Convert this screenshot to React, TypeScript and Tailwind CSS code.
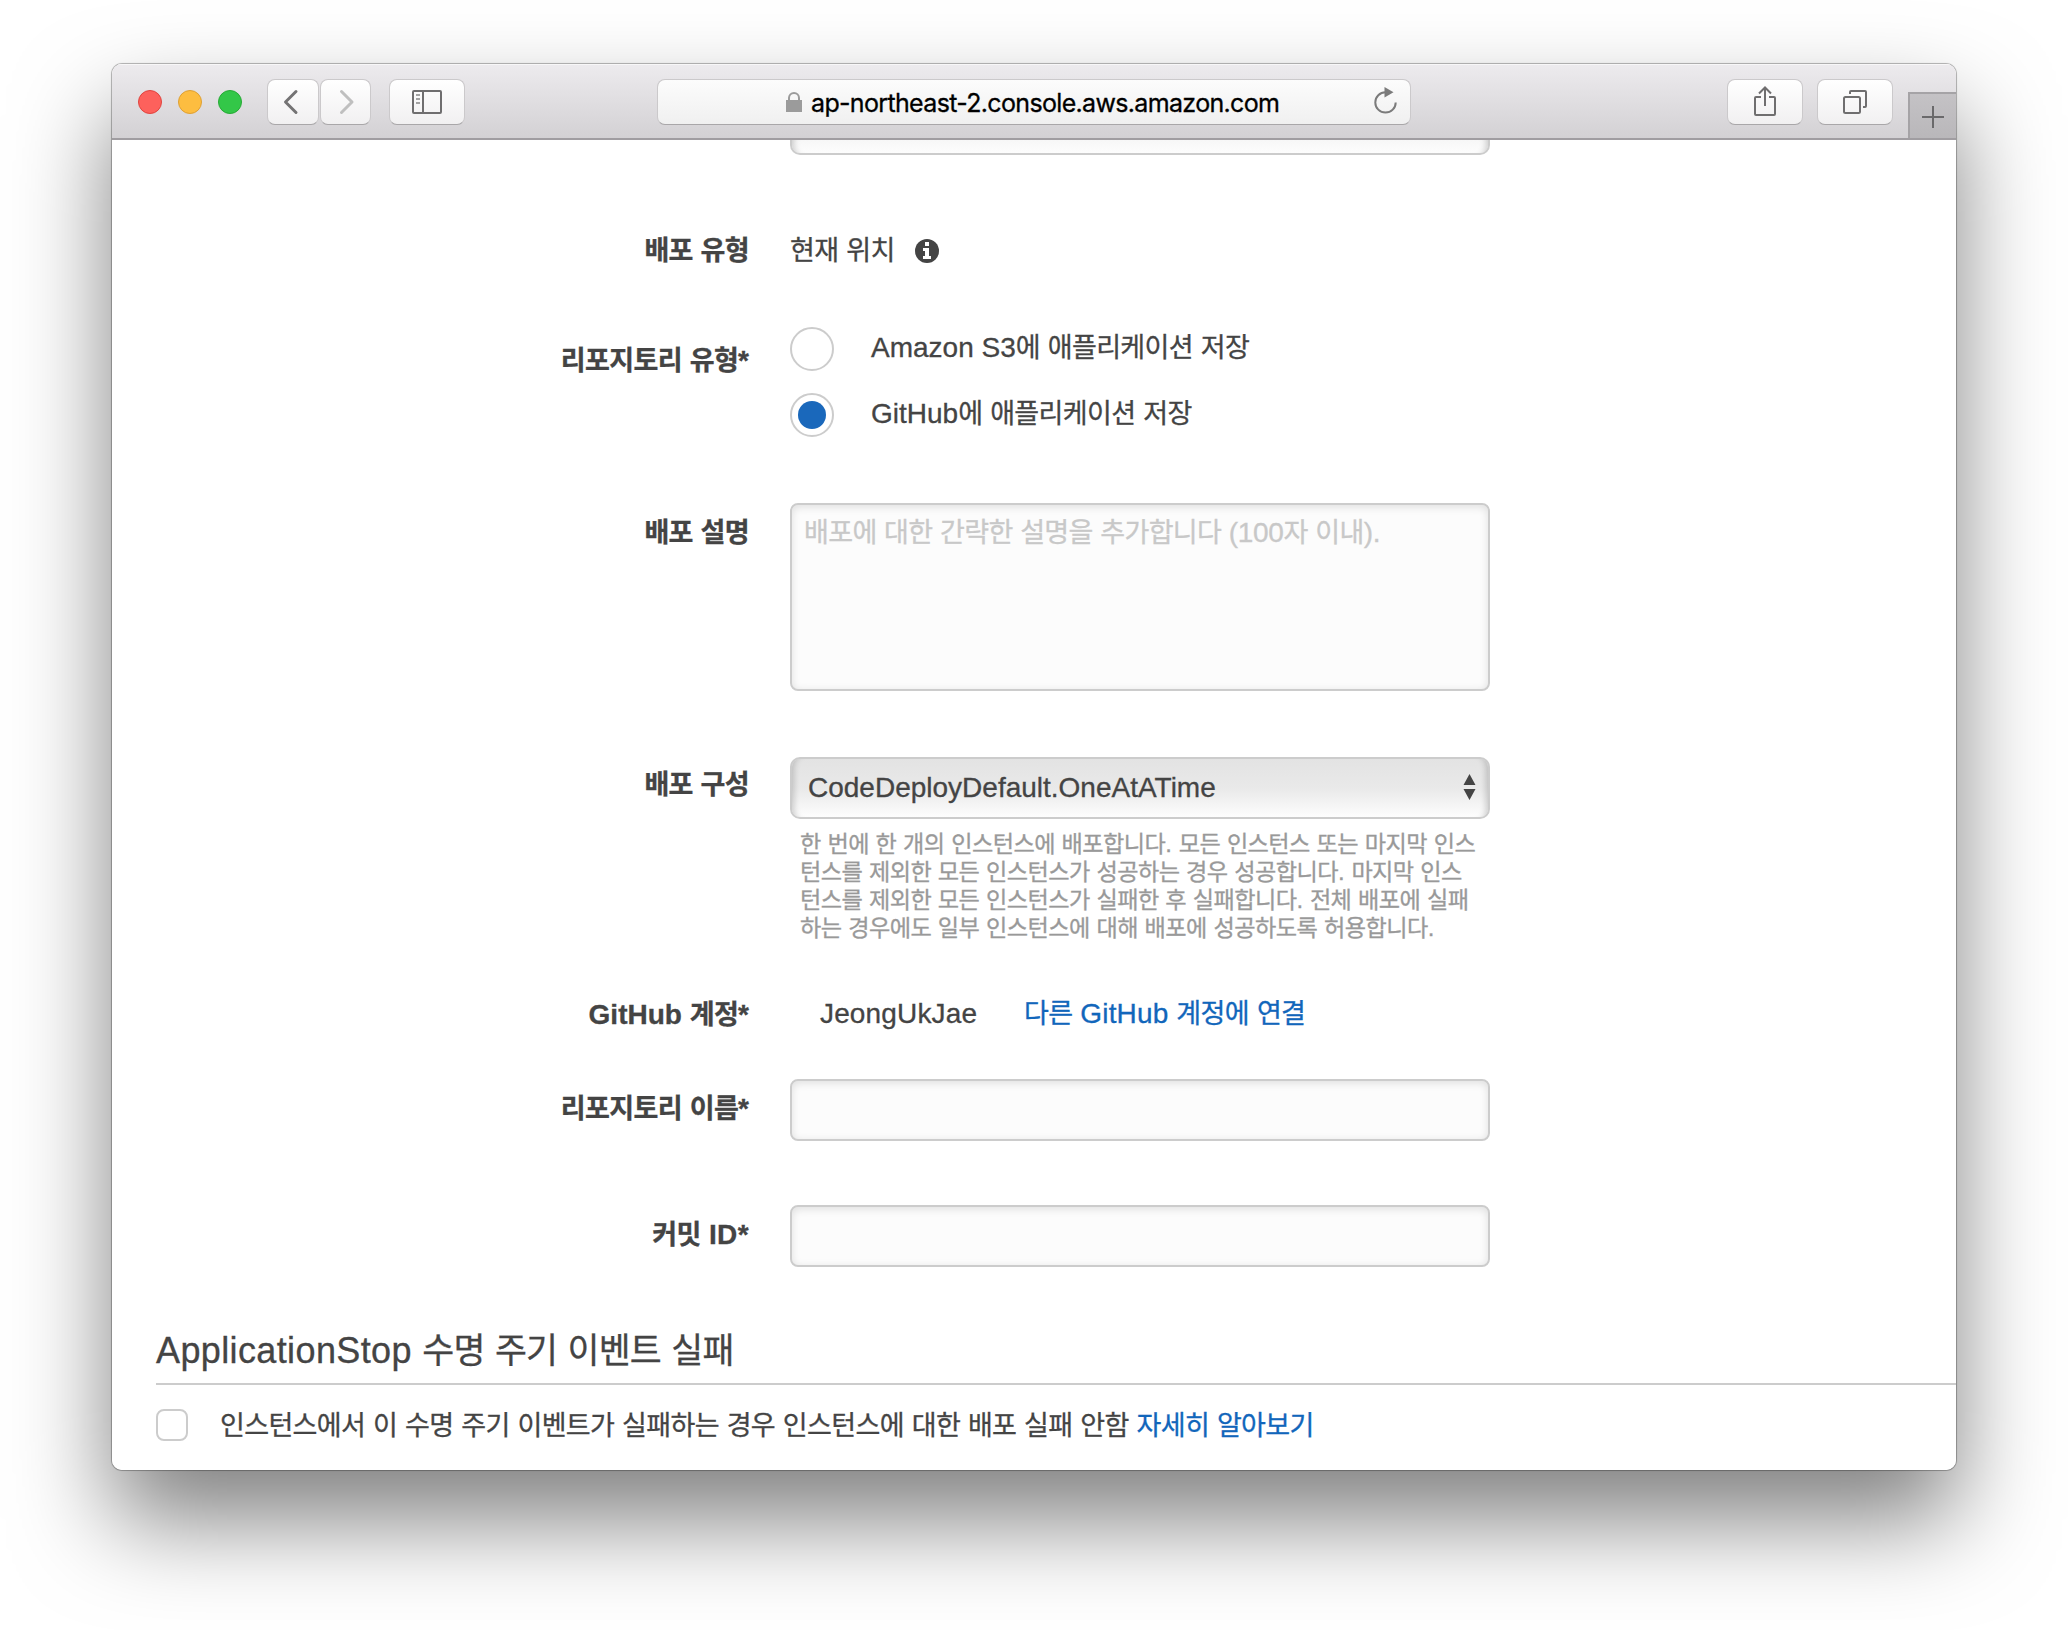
import React from 'react'

// Hangul runs are set slightly smaller and tighter than the Latin text around them.
function T({ children }: { children: string }) {
  return (
    <>
      {children.split(/([가-힣]+)/).map((part, i) =>
        i % 2 ? (
          <span key={i} className="text-[0.965em] tracking-[-0.024em]">
            {part}
          </span>
        ) : (
          part
        ),
      )}
    </>
  )
}

const BTN =
  'flex h-[46px] shrink-0 items-center justify-center rounded-[8px] border border-[#cbc9cb] border-b-[#a9a7a9] bg-linear-to-b from-white to-[#f1f0f1]'

function Toolbar() {
  return (
    <header className="flex h-[76px] shrink-0 items-start border-b-2 border-[#a09da1] bg-linear-to-b from-[#edebee] to-[#d3d1d4] pl-[26px] shadow-[inset_0_1px_0_#f8f7f8]">
      <div className="flex gap-4 pt-[26px]">
        <span className="size-6 rounded-full border border-[#e0443f] bg-[#fd615c]" />
        <span className="size-6 rounded-full border border-[#dea034] bg-[#fdbd40]" />
        <span className="size-6 rounded-full border border-[#27aa35] bg-[#33c748]" />
      </div>
      <div className="ml-[25px] flex gap-px pt-[15px]">
        <div className={BTN + ' w-[52px]'}>
          <svg width="50" height="44" viewBox="0 0 50 44" fill="none" stroke="#747374" strokeWidth="3" strokeLinecap="round" strokeLinejoin="round">
            <path d="M28 11.500L17.500 22L28 32.500" />
          </svg>
        </div>
        <div className={BTN + ' w-[51px]'}>
          <svg width="49" height="44" viewBox="0 0 49 44" fill="none" stroke="#bfbfbf" strokeWidth="3" strokeLinecap="round" strokeLinejoin="round">
            <path d="M20.500 11.500L31 22L20.500 32.500" />
          </svg>
        </div>
      </div>
      <div className="ml-[18px] pt-[15px]">
        <div className={BTN + ' w-[76px]'}>
          <svg width="30" height="24" viewBox="0 0 30 24" fill="none" stroke="#6f6e6f" strokeWidth="2">
            <rect x="1" y="1" width="28" height="22" rx="1" />
            <path d="M11 1V23" />
            <path d="M4 5H8M4 9H8M4 13H8" stroke="#a3a3a3" />
          </svg>
        </div>
      </div>
      <div className="ml-[192px] pt-[15px]">
        <div className="flex h-[46px] w-[754px] items-center rounded-[8px] border border-[#cbc9cb] border-b-[#a9a7a9] bg-linear-to-b from-[#fcfcfc] to-[#f0f0f0] pl-[128px]">
          <svg width="16" height="20" viewBox="0 0 16 20" className="-mt-px shrink-0">
            <rect x="0" y="8" width="16" height="12" fill="#9b9b9b" />
            <path d="M3 9V6a5 5 0 0 1 10 0v3" fill="none" stroke="#9b9b9b" strokeWidth="2" />
          </svg>
          <span className="mt-1 ml-[9px] w-[560px] font-['Inter',sans-serif] text-[25px] tracking-[-0.66px] whitespace-nowrap text-black [-webkit-text-stroke:0.3px]">
            ap-northeast-2.console.aws.amazon.com
          </span>
          <svg width="24" height="28" viewBox="0 0 24 28" className="mt-[-2px] ml-[3px] shrink-0">
            <path d="M11.500 5.200A10.200 10.200 0 1 0 21.700 15.400" fill="none" stroke="#7b7b7b" strokeWidth="2" />
            <path d="M10.500 0L19.500 5.300L10.500 10.600Z" fill="#7b7b7b" />
          </svg>
        </div>
      </div>
      <div className="ml-[316px] flex gap-[14px] pt-[15px]">
        <div className={BTN + ' w-[76px]'}>
          <svg width="24" height="32" viewBox="0 0 24 32" fill="none" stroke="#6f6e6f" strokeWidth="2" className="-mt-[2px]">
            <path d="M8 12H3a1 1 0 0 0-1 1V29a1 1 0 0 0 1 1H21a1 1 0 0 0 1-1V13a1 1 0 0 0-1-1H16" />
            <path d="M12 21V3M6 8.500L12 2.500L18 8.500" />
          </svg>
        </div>
        <div className={BTN + ' w-[76px]'}>
          <svg width="26" height="26" viewBox="0 0 26 26" fill="none" stroke="#6f6e6f" strokeWidth="2">
            <rect x="2" y="8" width="16" height="16" rx="1.500" />
            <path d="M8 5V3a1 1 0 0 1 1-1H23a1 1 0 0 1 1 1V17a1 1 0 0 1-1 1H21" />
          </svg>
        </div>
      </div>
      <div className="mt-[28px] ml-[15px] flex h-[46px] flex-1 items-center justify-center border-t-2 border-l-2 border-[#a5a3a6] bg-linear-to-b from-[#c4c2c5] to-[#b9b7ba]">
        <svg width="22" height="22" viewBox="0 0 22 22" stroke="#6a696b" strokeWidth="2" className="mt-px">
          <path d="M11 0V22M0 11H22" />
        </svg>
      </div>
    </header>
  )
}

function Row({ label, className, labelClass, children }: { label: string; className: string; labelClass: string; children: React.ReactNode }) {
  return (
    <div className={'grid grid-cols-[637px_700px] items-start gap-x-[41px] ' + className}>
      <div className={'text-right leading-10 font-bold whitespace-nowrap ' + labelClass}>
        <T>{label}</T>
      </div>
      <div>{children}</div>
    </div>
  )
}

function Radio({ checked, children }: { checked?: boolean; children: string }) {
  return (
    <div className="flex h-11 items-center">
      <span className="flex size-11 items-center justify-center rounded-full border-2 border-[#ccc] bg-white">
        {checked && <span className="size-7 rounded-full bg-[#1a68bb]" />}
      </span>
      <span className="mb-[2px] ml-[37px] leading-10 whitespace-nowrap">
        <T>{children}</T>
      </span>
    </div>
  )
}

const FIELD = 'rounded-[8px] border-2 border-[#ccc] bg-[#fcfcfc] shadow-[inset_0_2px_8px_rgba(0,0,0,0.12)]'
const SELECT =
  'border-2 border-[#ccc] bg-linear-to-b from-[#e3e3e3] via-[#e9e9e9] via-50% to-[#fdfdfd] shadow-[inset_8px_0_6px_-6px_rgba(0,0,0,0.18),inset_-8px_0_6px_-6px_rgba(0,0,0,0.18)]'

export default function App() {
  return (
    <div className="h-[1630px] w-[2068px] overflow-hidden bg-white px-28 pt-16 font-['Liberation_Sans','Noto_Sans_CJK_KR',sans-serif] text-[28px] text-[#444]">
      <div className="h-[1406px] w-[1844px] rounded-[10px] shadow-[0_0_0_1px_rgba(0,0,0,0.2),0_0_2px_rgba(0,0,0,0.3),0_50px_96px_rgba(0,0,0,0.5)]">
        <div className="flex h-full w-full flex-col overflow-hidden rounded-[10px] bg-white">
          <Toolbar />
          <main className="flex flex-col [-webkit-text-stroke:0.3px]">
            <div className="ml-[678px] h-[15px] w-[700px] rounded-b-[10px] border-2 border-t-0 border-[#ccc] bg-linear-to-b from-[#f7f7f7] to-[#fdfdfd] shadow-[inset_8px_0_6px_-6px_rgba(0,0,0,0.18),inset_-8px_0_6px_-6px_rgba(0,0,0,0.18)]" />

            <Row label="배포 유형" className="mt-[76px]" labelClass="">
              <div className="flex h-10 items-center leading-10">
                <span><T>현재 위치</T></span>
                <svg width="24" height="24" viewBox="0 0 24 24" className="ml-5">
                  <circle cx="12" cy="12" r="12" fill="#444" />
                  <path d="M10 3h4v4h-4zM8 9h6v8h2v3H8v-3h2v-5H8z" fill="#fff" />
                </svg>
              </div>
            </Row>

            <Row label="리포지토리 유형*" className="mt-[56px]" labelClass="pt-[14px]">
              <div className="flex flex-col gap-[22px]">
                <Radio>Amazon S3에 애플리케이션 저장</Radio>
                <Radio checked>GitHub에 애플리케이션 저장</Radio>
              </div>
            </Row>

            <Row label="배포 설명" className="mt-[66px]" labelClass="pt-[10px]">
              <div className={FIELD + ' h-[188px] px-3 pt-[8px] leading-10 tracking-[-0.3px] whitespace-nowrap text-[#c8c8c8]'}>
                <T>배포에 대한 간략한 설명을 추가합니다 (100자 이내).</T>
              </div>
            </Row>

            <Row label="배포 구성" className="mt-[66px]" labelClass="pt-[8px]">
              <div className={SELECT + ' flex h-[62px] items-center justify-between rounded-[10px] pr-3 pl-4'}>
                <span className="-mt-px">CodeDeployDefault.OneAtATime</span>
                <svg width="13" height="26" viewBox="0 0 13 26" fill="#444" className="-mt-[2px]">
                  <path d="M0.500 11L6.500 0L12.500 11ZM0.500 15H12.500L6.500 26Z" />
                </svg>
              </div>
              <div className="mt-[11px] pl-[10px] text-[24px] leading-7 whitespace-nowrap text-[#999]">
                <p><T>한 번에 한 개의 인스턴스에 배포합니다. 모든 인스턴스 또는 마지막 인스</T></p>
                <p><T>턴스를 제외한 모든 인스턴스가 성공하는 경우 성공합니다. 마지막 인스</T></p>
                <p><T>턴스를 제외한 모든 인스턴스가 실패한 후 실패합니다. 전체 배포에 실패</T></p>
                <p><T>하는 경우에도 일부 인스턴스에 대해 배포에 성공하도록 허용합니다.</T></p>
              </div>
            </Row>

            <Row label="GitHub 계정*" className="mt-[52px]" labelClass="pt-px">
              <div className="flex h-10 pl-[30px] leading-10 tracking-[0.15px] whitespace-nowrap">
                <span className="w-[204px]">JeongUkJae</span>
                <a className="text-[#1166bb]"><T>다른 GitHub 계정에 연결</T></a>
              </div>
            </Row>

            <Row label="리포지토리 이름*" className="mt-[44px]" labelClass="pt-[10px]">
              <div className={FIELD + ' h-[62px]'} />
            </Row>

            <Row label="커밋 ID*" className="mt-[64px] [&>:first-child]:tracking-[0.4px]" labelClass="pt-[10px]">
              <div className={FIELD + ' h-[62px]'} />
            </Row>

            <h2 className="mt-[58px] ml-11 h-[60px] border-b-2 border-[#ccc] pt-[2px] text-[36px] leading-[48px] tracking-[0.38px] whitespace-nowrap">
              <T>ApplicationStop 수명 주기 이벤트 실패</T>
            </h2>

            <div className="mt-6 ml-11 flex h-8 items-center leading-8 whitespace-nowrap">
              <span className="size-8 rounded-[8px] border-2 border-[#ccc] bg-white" />
              <span className="mt-px ml-8">
                <T>인스턴스에서 이 수명 주기 이벤트가 실패하는 경우 인스턴스에 대한 배포 실패 안함 </T>
                <a className="text-[#1166bb]"><T>자세히 알아보기</T></a>
              </span>
            </div>
          </main>
        </div>
      </div>
    </div>
  )
}
